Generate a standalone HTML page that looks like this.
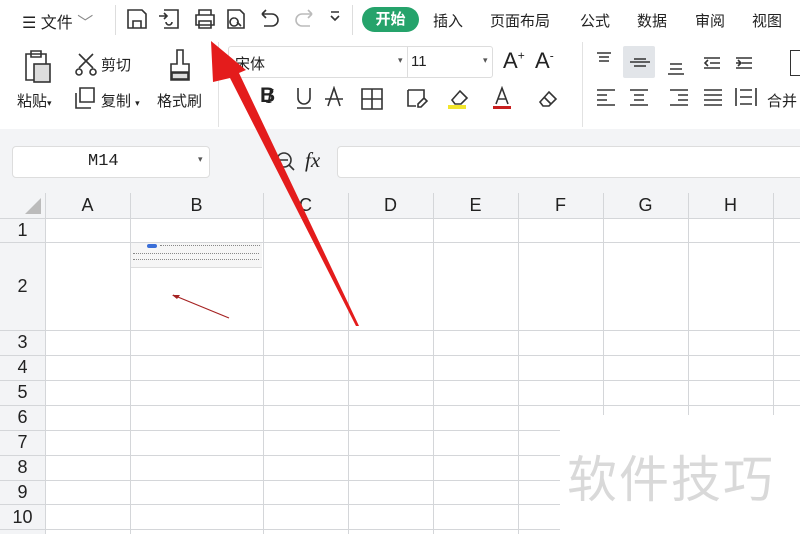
<!DOCTYPE html>
<html><head><meta charset="utf-8"><style>
*{margin:0;padding:0;box-sizing:border-box}
body{width:800px;height:534px;overflow:hidden;background:#fff;position:relative;font-family:"Liberation Sans","Noto Sans CJK SC",sans-serif;color:#222}
.a{position:absolute;white-space:nowrap}
.t{font-size:15px}
.v{position:absolute;top:193px;bottom:0;width:1px;background:#d4d6d9}
.h{position:absolute;left:0;right:0;height:1px;background:#d4d6d9}
.ch{position:absolute;top:193px;height:25px;font-size:18px;text-align:center;line-height:25px;color:#222}
.rh{position:absolute;left:0;width:45px;text-align:center;font-size:18px;color:#222}
svg{position:absolute}
</style></head><body>
<!-- toolbar -->
<div class="a" style="left:0;top:0;width:800px;height:130px;background:#fff"></div>
<div class="a t" style="left:22px;top:9px;font-size:16px">☰ 文件 <span style="color:#888">﹀</span></div>
<div class="a" style="left:115px;top:5px;width:1px;height:30px;background:#ddd"></div>
<svg style="left:124px;top:6px" width="230" height="26" fill="none" stroke="#333" stroke-width="1.6">
<path d="M4 4h14l4 4v14H4z M9 22v-7h8v7"/>
<path d="M40 4h14v18H40 M35 10h8 M40 13l3-3-3-3 M42 16a3 3 0 1 0 6 0"/>
<path d="M72 9h18v10H72z M75 9V4h12v5 M75 15h12v7H75z"/>
<path d="M104 4h12l4 4v14h-16z M110 12a4 4 0 1 0 .1 0 M113 16l4 4"/>
<path d="M138 8h10a6 6 0 0 1 0 12h-8 M138 8l4-4 M138 8l4 4"/>
<path stroke="#bbb" d="M188 8h-10a6 6 0 0 0 0 12h8 M188 8l-4-4 M188 8l-4 4"/>
<path d="M207 10l4 4 4-4 M207 6h8"/>
</svg>
<div class="a" style="left:352px;top:5px;width:1px;height:30px;background:#ddd"></div>
<div class="a" style="left:362px;top:7px;width:57px;height:25px;border-radius:13px;background:#25a36b;color:#fff;font-size:15px;font-weight:bold;text-align:center;line-height:25px">开始</div>
<div class="a t" style="left:433px;top:10px">插入</div>
<div class="a t" style="left:490px;top:10px">页面布局</div>
<div class="a t" style="left:580px;top:10px">公式</div>
<div class="a t" style="left:637px;top:10px">数据</div>
<div class="a t" style="left:695px;top:10px">审阅</div>
<div class="a t" style="left:752px;top:10px">视图</div>
<!-- row 2 -->
<svg style="left:22px;top:48px" width="200" height="36" fill="none" stroke="#333" stroke-width="1.6">
<path d="M4 6h20v26H4z M9 3h10v6H9z"/><rect x="12" y="16" width="16" height="18" fill="#ddd"/>
<path d="M57 6l14 14 M71 6L57 20"/><circle cx="57" cy="24" r="3"/><circle cx="71" cy="24" r="3"/>
<path d="M155 2h6v14h6v8h-18v-8h6z M149 24v8h18v-8"/><rect x="150" y="25" width="16" height="6" fill="#ddd"/>
</svg>
<div class="a t" style="left:101px;top:54px">剪切</div>
<div class="a t" style="left:17px;top:90px">粘贴<span style="font-size:9px">▾</span></div>
<svg style="left:74px;top:86px" width="24" height="24" fill="none" stroke="#333" stroke-width="1.6"><path d="M6 2h14v14H6z M2 7v15h15"/></svg>
<div class="a t" style="left:101px;top:90px">复制 <span style="font-size:9px">▾</span></div>
<div class="a t" style="left:157px;top:90px">格式刷</div>
<div class="a" style="left:218px;top:42px;width:1px;height:85px;background:#e2e2e2"></div>
<div class="a" style="left:228px;top:46px;width:265px;height:32px;border:1px solid #ddd;border-radius:3px"></div>
<div class="a" style="left:407px;top:46px;width:1px;height:32px;background:#ddd"></div>
<div class="a t" style="left:235px;top:53px">宋体</div>
<div class="a" style="left:398px;top:55px;font-size:9px;color:#555">▾</div>
<div class="a t" style="left:411px;top:53px">11</div>
<div class="a" style="left:483px;top:55px;font-size:9px;color:#555">▾</div>
<div class="a" style="left:503px;top:48px;font-size:22px">A<sup style="font-size:12px">+</sup></div>
<div class="a" style="left:535px;top:48px;font-size:22px">A<sup style="font-size:12px">-</sup></div>
<div class="a" style="left:260px;top:84px;font-size:21px;font-weight:bold">B</div>
<div class="a" style="left:266px;top:84px;font-size:21px;font-style:italic;font-family:'Liberation Serif'">I</div>
<svg style="left:294px;top:86px" width="290" height="26" fill="none" stroke="#333" stroke-width="1.6">
<path d="M4 2v10a6 6 0 0 0 12 0V2 M3 22h14"/>
<path d="M34 20l6-18 6 18 M31 13h18"/>
<path d="M68 3h20v20H68z M78 3v20 M68 13h20"/>
<path d="M114 4h16v8 M114 4v16h8 M124 18l6-6 3 3-6 6h-3z"/>
<path d="M158 14l8-9 7 7-6 6h-6z"/><rect x="154" y="19" width="18" height="4" fill="#f2e52b" stroke="none"/>
<path d="M202 18l6-16 6 16 M204 13h8"/><rect x="199" y="20" width="18" height="3" fill="#c81e1e" stroke="none"/>
<path d="M246 16l9-10 7 7-7 7h-6z M250 11l7 7"/>
</svg>
<div class="a" style="left:582px;top:42px;width:1px;height:85px;background:#e2e2e2"></div>
<div class="a" style="left:623px;top:46px;width:32px;height:32px;background:#e2e5e9;border-radius:2px"></div>
<svg style="left:594px;top:50px" width="206" height="60" fill="none" stroke="#333" stroke-width="1.6">
<path d="M3 3h14 M5 7h10 M5 11h10"/><path d="M36 12h20 M40 9h12 M40 16h12"/><path d="M76 14h12 M76 19h12 M74 24h16"/>
<path d="M110 8h16 M116 13h10 M110 18h16 M114 10l-3 3 3 3"/><path d="M142 8h16 M148 13h10 M142 18h16 M142 13h4 M144 10l3 3-3 3"/>
<path d="M3 40h18 M3 45h10 M3 50h10 M3 55h18"/><path d="M36 40h18 M40 45h10 M40 50h10 M36 55h18"/>
<path d="M76 40h18 M84 45h10 M84 50h10 M76 55h18"/><path d="M110 40h18 M110 45h18 M110 50h18 M110 55h18"/>
<path d="M142 38v18 M162 38v18 M146 47h12 M146 40h12 M146 54h12"/>
</svg>
<div class="a t" style="left:767px;top:90px">合并</div>
<div class="a" style="left:790px;top:50px;width:12px;height:26px;border:1.5px solid #333"></div>
<div class="a" style="left:0;top:129px;width:800px;height:64px;background:#f3f4f6"></div>
<div class="a" style="left:12px;top:146px;width:198px;height:32px;background:#fff;border:1px solid #ddd;border-radius:4px"></div>
<div class="a" style="left:88px;top:152px;font-family:'Liberation Mono';font-size:17px">M14</div>
<div class="a" style="left:198px;top:154px;font-size:9px;color:#555">▾</div>
<svg style="left:274px;top:150px" width="24" height="24" fill="none" stroke="#333" stroke-width="1.6"><circle cx="10" cy="10" r="7"/><path d="M15 15l5 5 M6 10h8"/></svg>
<div class="a" style="left:305px;top:148px;font-size:21px;font-style:italic;font-family:'Liberation Serif'">fx</div>
<div class="a" style="left:337px;top:146px;width:470px;height:32px;background:#fff;border:1px solid #ddd;border-radius:4px"></div>
<!-- grid -->
<div class="a" style="left:0;top:193px;width:800px;height:25px;background:#f3f4f6"></div>
<div class="a" style="left:0;top:193px;width:45px;height:341px;background:#f3f4f6"></div>
<svg style="left:24px;top:197px" width="18" height="18"><path d="M17 1V17H1z" fill="#bbb"/></svg>
<div class="v" style="left:45px"></div><div class="v" style="left:130px"></div><div class="v" style="left:263px"></div>
<div class="v" style="left:348px"></div><div class="v" style="left:433px"></div><div class="v" style="left:518px"></div>
<div class="v" style="left:603px"></div><div class="v" style="left:688px"></div><div class="v" style="left:773px"></div>
<div class="h" style="top:218px"></div><div class="h" style="top:242px"></div><div class="h" style="top:330px"></div>
<div class="h" style="top:355px"></div><div class="h" style="top:380px"></div><div class="h" style="top:405px"></div>
<div class="h" style="top:430px"></div><div class="h" style="top:455px"></div><div class="h" style="top:480px"></div>
<div class="h" style="top:504px"></div><div class="h" style="top:529px"></div>
<div class="ch" style="left:45px;width:85px">A</div><div class="ch" style="left:130px;width:133px">B</div>
<div class="ch" style="left:263px;width:85px">C</div><div class="ch" style="left:348px;width:85px">D</div>
<div class="ch" style="left:433px;width:85px">E</div><div class="ch" style="left:518px;width:85px">F</div>
<div class="ch" style="left:603px;width:85px">G</div><div class="ch" style="left:688px;width:85px">H</div>
<div class="rh" style="top:220px">1</div><div class="rh" style="top:276px">2</div><div class="rh" style="top:332px">3</div>
<div class="rh" style="top:357px">4</div><div class="rh" style="top:382px">5</div><div class="rh" style="top:407px">6</div>
<div class="rh" style="top:432px">7</div><div class="rh" style="top:457px">8</div><div class="rh" style="top:482px">9</div>
<div class="rh" style="top:507px">10</div>
<!-- thumbnail -->
<div class="a" style="left:131px;top:243px;width:131px;height:86px;background:#fff"></div>
<div class="a" style="left:131px;top:243px;width:131px;height:25px;background:#f6f6f6;border-bottom:1px solid #ddd"></div>
<div class="a" style="left:147px;top:244px;width:10px;height:4px;border-radius:2px;background:#3b6fd8"></div>
<div class="a" style="left:160px;top:245px;width:100px;height:1px;border-top:1px dotted #888"></div>
<div class="a" style="left:133px;top:253px;width:126px;height:1px;border-top:1px dotted #888"></div>
<div class="a" style="left:133px;top:259px;width:126px;height:1px;border-top:1px dotted #888"></div>
<svg style="left:131px;top:243px" width="131" height="86"><path d="M42 52l56 23" stroke="#a52222" stroke-width="1.2"/><path d="M41 52l8 0-3 4z" fill="#a52222"/></svg>
<!-- watermark -->
<div class="a" style="left:560px;top:415px;width:240px;height:119px;background:#fff"></div>
<div class="a" style="left:567px;top:440px;font-size:50px;color:#d9d9d9;font-family:'Noto Sans CJK SC',sans-serif;letter-spacing:2px">软件技巧</div>
<!-- red arrow -->
<svg style="left:0;top:0" width="800" height="534"><path d="M211 41L246 70L239 73L359 326L356 326L230 78L213 82z" fill="#e41c1c"/></svg>
</body></html>
